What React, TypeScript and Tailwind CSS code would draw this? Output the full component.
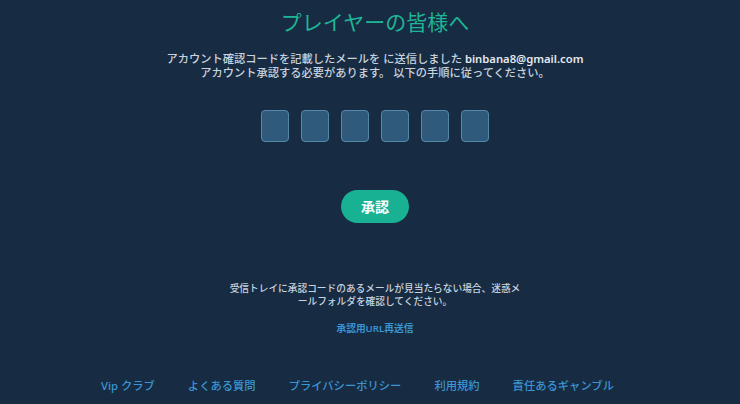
export default function App() {
  const font = { fontFamily: '"Noto Sans", "Noto Sans CJK JP", sans-serif' };
  return (
    <div className="w-[740px] h-[404px] bg-[#172b43] flex flex-col items-center overflow-hidden pl-[10px]" style={font}>
      <h1 className="mt-[8px] text-[21px] leading-[28px] font-normal text-[#1db596]">プレイヤーの皆様へ</h1>
      <div className="mt-[16px] text-center text-[11.25px] leading-[14px] font-medium text-[#c9d3de]">
        <p>アカウント確認コードを記載したメールを に送信しました <span className="font-semibold text-[#e3e9ef]">binbana8@gmail.com</span></p>
        <p>アカウント承認する必要があります。 以下の手順に従ってください。</p>
      </div>
      <div className="mt-[30px] flex gap-[12px]">
        {[0, 1, 2, 3, 4, 5].map((i) => (
          <div key={i} className="w-[28px] h-[32px] rounded-[4px] bg-[#2f5a7c] border border-[#5686a8]" />
        ))}
      </div>
      <button className="mt-[48px] w-[68px] h-[33px] rounded-full bg-[#19b193] text-white text-[14px] font-bold">承認</button>
      <div className="mt-[59px] w-[294px] text-center text-[9.7px] leading-[13px] font-medium text-[#c9d3de]">
        受信トレイに承認コードのあるメールが見当たらない場合、迷惑メールフォルダを確認してください。
      </div>
      <a className="mt-[14px] text-[9.7px] font-semibold text-[#3a95d2]">承認用URL再送信</a>
      <div className="mt-[41px] self-start ml-[91px] flex gap-[33px] text-[11.3px] font-medium text-[#3a95d2]">
        <span>Vip クラブ</span>
        <span>よくある質問</span>
        <span>プライバシーポリシー</span>
        <span>利用規約</span>
        <span>責任あるギャンブル</span>
      </div>
    </div>
  );
}
